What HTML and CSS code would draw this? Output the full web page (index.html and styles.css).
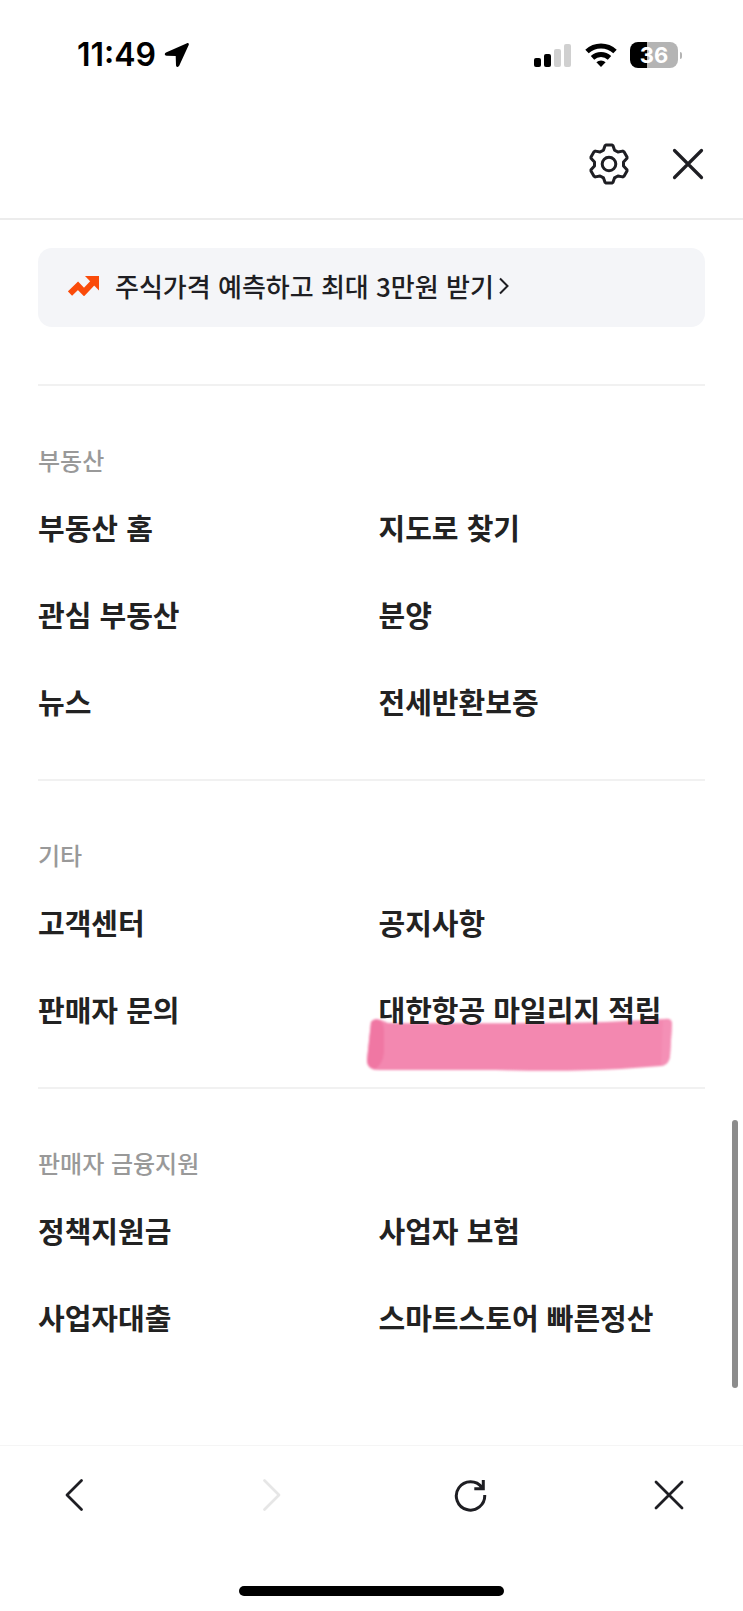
FILE: index.html
```html
<!DOCTYPE html>
<html lang="ko">
<head>
  <meta charset="UTF-8" />
  <meta name="viewport" content="width=device-width, initial-scale=1" />
  <title>전체 서비스</title>
  <link rel="stylesheet" href="styles.css">
</head>
<body>
  <div class="status-bar">
    <div class="status-time">
      <span>11:49</span>
      <svg width="26" height="26" viewBox="0 0 26 26"><path d="M23 1.200 2 10.600c-1.800.9-1.400 3.100.5 3.200l9.200.3.3 9.100c.1 2 2.300 2.400 3.200.6L24.700 3c.6-1.300-.4-2.300-1.700-1.800z"/></svg>
    </div>
    <div class="status-icons">
      <svg width="38" height="26" viewBox="0 0 38 26">
        <rect x="0" y="16" width="7" height="9" rx="2"/>
        <rect x="10" y="12" width="7" height="13" rx="2"/>
        <rect x="20" y="7" width="7" height="18" rx="2" fill="#d0d0d0"/>
        <rect x="30" y="2" width="7" height="23" rx="2" fill="#d0d0d0"/>
      </svg>
      <svg width="32" height="26" viewBox="0 0 32 26">
        <g fill="none" stroke="#000" stroke-width="5">
          <path d="M2 9.500a20.500 20.500 0 0 1 28 0"/>
          <path d="M7.500 15.800a12.500 12.500 0 0 1 17 0"/>
        </g>
        <path d="M16 25l-4.600-4.700a6.800 6.800 0 0 1 9.200 0z"/>
      </svg>
      <div class="battery">36</div>
    </div>
  </div>

  <header class="header">
    <button class="icon-btn" aria-label="설정">
      <svg width="42" height="42" viewBox="-21 -21 42 42" stroke-width="3">
        <path d="M-3 -19H3L4 -18.300 5.500 -13.900 8.900 -12 13.700 -12.900 15 -12.200 18 -7 18 -5.800 14.500 -2V2L18 5.800 18 7 15 12.200 13.700 12.900 8.900 12 5.500 13.900 4 18.300 3 19H-3L-4 18.300 -5.500 13.900 -8.900 12 -13.700 12.900 -15 12.200 -18 7 -18 5.800 -14.500 2V-2L-18 -5.800 -18 -7 -15 -12.200 -13.700 -12.900 -8.900 -12 -5.500 -13.900 -4 -18.300Z"/>
        <circle r="6.800"/>
      </svg>
    </button>
    <button class="icon-btn" aria-label="닫기">
      <svg width="32" height="32" viewBox="0 0 32 32" stroke-width="3.200"><path d="M2.500 2.500l27 27M29.500 2.500l-27 27"/></svg>
    </button>
  </header>

  <main class="content">
    <a class="banner" href="#">
      <svg width="31" height="20" viewBox="0 0 31 20">
        <path d="M2 17.500l8-7.700 6 6.200L26 5.500" fill="none" stroke="#fa4b0a" stroke-width="6"/>
        <path d="M17 0H31v14.500z" fill="#fa4b0a"/>
      </svg>
      <span class="banner-text">주식가격 예측하고 최대 3만원 받기</span>
      <svg class="banner-arrow" width="10" height="18" viewBox="0 0 10 18"><path d="M1 1.500l7.500 7.500L1 16.500" fill="none" stroke="#1e1e23" stroke-width="2"/></svg>
    </a>

    <section class="menu">
      <h2>부동산</h2>
      <ul>
        <li><a href="#">부동산 홈</a></li>
        <li><a href="#">지도로 찾기</a></li>
        <li><a href="#">관심 부동산</a></li>
        <li><a href="#">분양</a></li>
        <li><a href="#">뉴스</a></li>
        <li><a href="#">전세반환보증</a></li>
      </ul>
    </section>

    <section class="menu">
      <h2>기타</h2>
      <ul>
        <li><a href="#">고객센터</a></li>
        <li><a href="#">공지사항</a></li>
        <li><a href="#">판매자 문의</a></li>
        <li>
          <a class="marked" href="#">대한항공 마일리지 적립
            <svg class="marker" width="308" height="54" viewBox="0 0 308 54">
              <path d="M5 4Q8 0 15 2L22 5Q150 6 240 4L299 1Q306 0 306 6L304 38Q303 47 295 48L255 51Q200 54 130 52L12 52Q1 52 1 42Z" fill="#f388b0"/>
              <path d="M5 4Q8 0 13 2 18 5 18 14V34Q17 46 9 51 1 50 1 42Z" fill="#f077a3"/>
              <path d="M297 2Q306 0 306 6L304 38Q303 47 295 48Z" fill="#f490b6"/>
            </svg>
          </a>
        </li>
      </ul>
    </section>

    <section class="menu">
      <h2>판매자 금융지원</h2>
      <ul>
        <li><a href="#">정책지원금</a></li>
        <li><a href="#">사업자 보험</a></li>
        <li><a href="#">사업자대출</a></li>
        <li><a href="#">스마트스토어 빠른정산</a></li>
      </ul>
    </section>

    <div class="scroll-thumb"></div>
  </main>

  <footer class="footer">
    <nav class="toolbar">
      <button class="icon-btn" aria-label="뒤로">
        <svg width="20" height="34" viewBox="0 0 20 34" stroke-width="2.800"><path d="M17.500 2.500L3 17l14.500 14.500"/></svg>
      </button>
      <button class="icon-btn" aria-label="앞으로" disabled>
        <svg width="20" height="34" viewBox="0 0 20 34" stroke-width="2.800"><path d="M2.500 2.500L17 17 2.500 31.500"/></svg>
      </button>
      <button class="icon-btn" aria-label="새로고침">
        <svg class="reload" width="34" height="34" viewBox="0 0 34 34" stroke-width="3"><path d="M30.700 17A14.200 14.200 0 1 1 28 9.500M29.300 2v8.800h-9"/></svg>
      </button>
      <button class="icon-btn" aria-label="닫기">
        <svg width="32" height="32" viewBox="0 0 32 32" stroke-width="2.800"><path d="M3 3l26 26M29 3L3 29"/></svg>
      </button>
    </nav>
    <div class="home-indicator"></div>
  </footer>
</body>
</html>
```
FILE: styles.css
```css
:root {
  --text: #222;
  --ink: #1e1e23;
  --muted: #999;
  --line: #f1f1f1;
  --side: 38px;
}

* {
  box-sizing: border-box;
  margin: 0;
  padding: 0;
}

body {
  display: flex;
  flex-direction: column;
  min-height: 100vh;
  background: #fff;
  color: var(--text);
  font-family: "Noto Sans CJK KR", sans-serif;
}

a {
  color: inherit;
  text-decoration: none;
}

svg {
  display: block;
  flex-shrink: 0;
}

/* status bar */
.status-bar {
  display: flex;
  justify-content: space-between;
  align-items: center;
  height: 110px;
  padding: 0 61px 0 77px;
}

.status-time {
  display: flex;
  align-items: center;
  gap: 8px;
  color: #000;
  font-family: Inter, sans-serif;
  font-size: 32px;
  font-weight: 600;
  line-height: 40px;
}

.status-icons {
  display: flex;
  align-items: center;
  gap: 13px;
}

.battery {
  position: relative;
  width: 48px;
  height: 26px;
  margin-right: 4px;
  border-radius: 8px;
  background: linear-gradient(to right, #000 36%, #b4b4b4 36%);
  color: #fff;
  font-family: Inter, sans-serif;
  font-size: 22px;
  font-weight: 700;
  line-height: 26px;
  text-align: center;
}

.battery::after {
  content: "";
  position: absolute;
  right: -4px;
  top: 10px;
  width: 2px;
  height: 7px;
  border-radius: 0 2px 2px 0;
  background: #b4b4b4;
}

/* header */
.header {
  display: flex;
  justify-content: flex-end;
  align-items: center;
  gap: 42px;
  height: 110px;
  padding: 0 39px;
  border-bottom: 2px solid #ececec;
}

.icon-btn {
  display: flex;
  justify-content: center;
  align-items: center;
  border: none;
  background: none;
  cursor: pointer;
}

.icon-btn svg {
  fill: none;
  stroke: var(--ink);
  stroke-linecap: round;
  stroke-linejoin: round;
}

.icon-btn:disabled svg {
  stroke: #e6e6e6;
}

.icon-btn .reload {
  stroke-linecap: butt;
  stroke-linejoin: miter;
}

/* content */
.content {
  position: relative;
  flex: 1;
  padding: 28px var(--side) 0;
}

.banner {
  display: flex;
  align-items: center;
  height: 79px;
  margin-bottom: 57px;
  padding: 0 30px 3px;
  border-radius: 14px;
  background: #f4f5f8;
  color: var(--ink);
}

.banner-text {
  margin-left: 16px;
  font-size: 26px;
  font-weight: 500;
  line-height: 40px;
}

.banner-arrow {
  margin-left: 5px;
}

.menu {
  padding: 58px 0;
  border-top: 2px solid var(--line);
}

.menu h2 {
  margin-bottom: 31px;
  color: var(--muted);
  font-size: 24px;
  font-weight: 500;
  line-height: 32px;
}

.menu ul {
  display: grid;
  grid-template-columns: 1fr 1fr;
  gap: 47px 14px;
  list-style: none;
}

.menu li {
  font-size: 29px;
  font-weight: 700;
  line-height: 40px;
  white-space: nowrap;
}

.marked {
  position: relative;
}

/* pen stroke under the link */
.marker {
  position: absolute;
  left: -13px;
  top: 30px;
  z-index: -1;
  filter: blur(1px);
}

.scroll-thumb {
  position: absolute;
  right: 5px;
  bottom: 57px;
  width: 6px;
  height: 268px;
  border-radius: 3px;
  background: #8c8c8c;
}

/* footer */
.footer {
  padding-bottom: 15px;
  border-top: 1px solid #f5f5f5;
}

.toolbar {
  display: flex;
  justify-content: space-between;
  padding: 25px 50px 67px;
}

.toolbar .icon-btn {
  width: 48px;
  height: 48px;
}

.home-indicator {
  width: 265px;
  height: 10px;
  margin: 0 auto;
  border-radius: 5px;
  background: #000;
}
```
